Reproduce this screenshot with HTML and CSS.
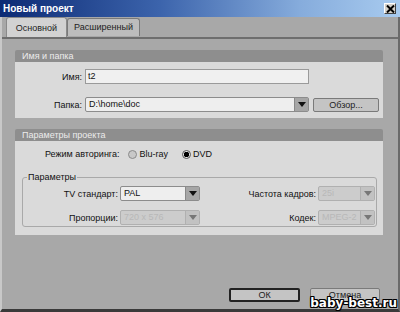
FILE: index.html
```html
<!DOCTYPE html>
<html>
<head>
<meta charset="utf-8">
<link rel="stylesheet" href="styles.css">
</head>
<body>
<div class="window">
  <div class="titlebar">
    <span class="title">Новый проект</span>
    <span class="close">
      <svg width="9" height="8" viewBox="0 0 9 8"><path d="M1 0.5 L8 7.5 M8 0.5 L1 7.5" stroke="#000" stroke-width="2"/></svg>
    </span>
  </div>
  <div class="tabs">
    <div class="tab active">Основной</div>
    <div class="tab">Расширенный</div>
  </div>
  <div class="content">
    <div class="section">
      <div class="section-head">Имя и папка</div>
      <div class="section-body s1">
        <div class="row">
          <span class="label lw1">Имя:</span>
          <div class="input name">t2</div>
        </div>
        <div class="row">
          <span class="label lw1">Папка:</span>
          <div class="select folder"><span class="val">D:\home\doc</span><span class="arrow"></span></div>
          <div class="button browse">Обзор...</div>
        </div>
      </div>
    </div>
    <div class="section sec2">
      <div class="section-head">Параметры проекта</div>
      <div class="section-body s2">
        <div class="row radios">
          <span class="label mode">Режим авторинга:</span>
          <span class="radio"><span class="dot off"></span>Blu-ray</span>
          <span class="radio"><span class="dot on"></span>DVD</span>
        </div>
        <div class="fieldset">
          <span class="legend">Параметры</span>
          <div class="grid">
            <span class="label">TV стандарт:</span>
            <div class="select small"><span class="val">PAL</span><span class="arrow"></span></div>
            <span class="label">Частота кадров:</span>
            <div class="select tiny disabled"><span class="val">25i</span><span class="arrow"></span></div>
            <span class="label">Пропорции:</span>
            <div class="select small disabled"><span class="val">720 x 576</span><span class="arrow"></span></div>
            <span class="label">Кодек:</span>
            <div class="select tiny disabled"><span class="val">MPEG-2</span><span class="arrow"></span></div>
          </div>
        </div>
      </div>
    </div>
  </div>
  <div class="footer">
    <div class="button ok">ОК</div>
    <div class="button cancel">Отмена</div>
  </div>
  <div class="watermark">baby-best.ru</div>
</div>
</body>
</html>
```
FILE: styles.css
```css
html, body { margin: 0; padding: 0; }
body {
  width: 400px; height: 312px; overflow: hidden;
  font-family: "Liberation Sans", Arial, sans-serif;
  font-size: 9px; color: #111;
}
.window {
  position: relative;
  width: 400px; height: 312px;
  background: #a8a8a8;
  box-sizing: border-box;
  border-bottom: 3px solid #3a3a3a;
  border-left: 2px solid #c8c8c8;
  border-right: 2px solid #6a6a6a;
}
.titlebar {
  height: 17px;
  margin-left: -2px; margin-right: -2px;
  background: linear-gradient(to right, #0c2a74 0%, #3c64ac 40%, #86acdc 75%, #a8cbef 100%);
  display: flex; align-items: center; justify-content: space-between;
  padding: 0 4px 0 3px;
}
.title { color: #fff; font-weight: bold; font-size: 10px; }
.close {
  width: 12px; height: 11px; background: #d4d0c8;
  border: 1px solid; border-color: #fff #404040 #404040 #fff;
  display: flex; align-items: center; justify-content: center; box-sizing: border-box;
}
.tabs {
  display: flex; align-items: flex-end;
  height: 19px; margin-top: 1px;
  padding-left: 4px;
  border-bottom: 2px solid #6e6e6e;
}
.tab {
  height: 17px; line-height: 17px;
  padding: 0 6px;
  background: #bdbdbd; color: #222;
  border: 1px solid #7a7a7a; border-bottom: none;
  border-radius: 3px 3px 0 0;
  margin-bottom: 1px;
}
.tab.active {
  width: 47px; text-align: center;
  height: 19px; line-height: 20px; background: #d2d2d2;
  border-color: #8a8a8a;
  margin-bottom: 0;
}
.content { padding: 11px 15px 0 13px; }
.section-head {
  height: 12px; line-height: 12px;
  background: #8e8e8e; color: #ececec;
  padding-left: 7px;
  border-radius: 2px 2px 0 0;
}
.section-body { background: #dadada; }
.s1 { padding: 7px 0 6px 0; display: flex; flex-direction: column; gap: 13px; }
.sec2 { margin-top: 11px; }
.s2 { padding: 7px 6px 8px 7px; }
.row { display: flex; align-items: center; }
.label { text-align: right; white-space: nowrap; }
.lw1 { width: 67px; margin-right: 3px; }
.input {
  height: 15px; box-sizing: border-box;
  background: #f0f0f0; border: 1px solid #9a9a9a;
  padding-left: 2px; line-height: 13px;
}
.name { width: 224px; }
.select {
  display: flex; height: 15px; box-sizing: border-box;
  border: 1px solid #8c8c8c; background: #eeeeee;
  border-radius: 2px;
}
.select .val { flex: 1; padding-left: 3px; line-height: 13px; overflow: hidden; white-space: nowrap; }
.select .arrow {
  width: 13px; background: #a6a6a6; border-left: 1px solid #888;
  position: relative;
}
.select .arrow::after {
  content: ""; position: absolute; left: 3px; top: 4px;
  border-left: 4px solid transparent; border-right: 4px solid transparent;
  border-top: 5px solid #111;
}
.folder { width: 224px; }
.button {
  box-sizing: border-box; height: 14px; line-height: 12px;
  text-align: center; background: #c4c4c4;
  border: 1px solid #7a7a7a; border-radius: 2px;
  color: #222;
}
.browse { width: 66px; margin-left: 4px; }
.radios { height: 12px; }
.mode { margin-left: 23px; margin-right: 9px; }
.radio { display: flex; align-items: center; margin-right: 14px; }
.dot {
  width: 9px; height: 9px; border-radius: 50%; box-sizing: border-box;
  border: 1px solid #8a8a8a; background: #c8c8c8; margin-right: 2px;
}
.dot.on { background: radial-gradient(circle, #000 0 2.5px, #e8e8e8 3px); border-color: #555; }
.fieldset {
  position: relative;
  margin-top: 17px;
  border: 1px solid #a9a9a9; border-radius: 3px;
  height: 50px; box-sizing: border-box;
  width: 355px;
}
.legend {
  position: absolute; left: 4px; top: -6px;
  background: #dadada; padding: 0 1px; line-height: 10px;
}
.grid {
  display: grid;
  grid-template-columns: 95px 80px 114px 57px;
  column-gap: 2px; row-gap: 9px;
  align-items: center;
  padding-top: 8px;
}
.small { width: 80px; }
.tiny { width: 57px; }
.select.disabled { background: #cccccc; border-color: #b0b0b0; color: #b8b8b8; }
.select.disabled .arrow { background: #c2c2c2; border-left-color: #b0b0b0; }
.select.disabled .arrow::after { border-top-color: #777; }
.footer {
  display: flex; justify-content: flex-end; gap: 10px;
  padding-right: 18px;
  margin-top: 53px;
}
.ok { width: 71px; border: 2px solid #222; line-height: 10px; }
.cancel { width: 70px; }
.watermark {
  position: absolute; right: 1px; bottom: -1px;
  font-family: "DejaVu Sans", sans-serif; font-weight: bold; font-size: 12px;
  color: #fff;
  text-shadow: -1px -1px 0 #000, 1px -1px 0 #000, -1px 1px 0 #000, 1px 1px 0 #000, 0 1px 0 #000, 0 -1px 0 #000, 1px 0 0 #000, -1px 0 0 #000;
}
```
